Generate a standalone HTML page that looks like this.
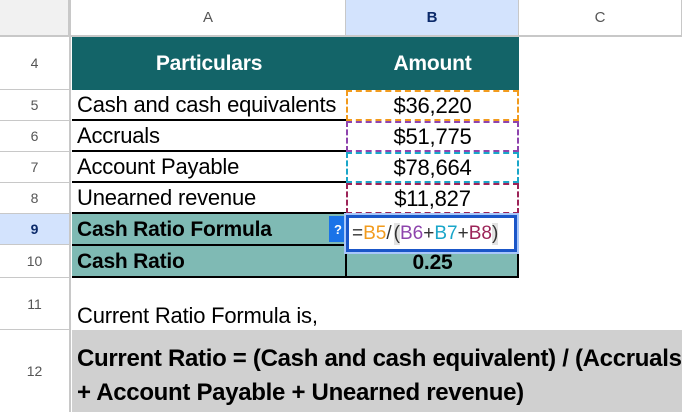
<!DOCTYPE html>
<html><head><meta charset="utf-8"><style>
body{margin:0;width:682px;height:412px;overflow:hidden;background:#fff;font-family:"Liberation Sans",sans-serif;position:relative}
div{position:absolute;box-sizing:border-box}
.rh{left:0;width:71px;background:#fff;border-bottom:1px solid #c8c8c8;border-right:2px solid #c8c8c8;color:#555;font-size:14px;display:flex;align-items:center;justify-content:center}
.ch{top:0;height:37px;border-right:1px solid #c8c8c8;border-bottom:2px solid #c8c8c8;color:#555;font-size:15px;display:flex;align-items:center;justify-content:center}
.t{font-size:22px;color:#000;display:flex;align-items:center;white-space:nowrap;letter-spacing:-0.2px}
.a{left:72px;width:274px;padding-left:5px;border-bottom:2px solid #000}
.b{left:346px;width:173px;justify-content:center}
</style></head><body>
<div class="ch" style="left:0;width:71px;background:#f1f1f1;border-right:3px solid #c8c8c8"></div>
<div class="ch" style="left:71px;width:275px">A</div>
<div class="ch" style="left:346px;width:173px;background:#d3e3fd;color:#0b2a6a;font-weight:bold">B</div>
<div class="ch" style="left:519px;width:163px">C</div>

<div class="rh" style="top:37px;height:53px">4</div>
<div class="rh" style="top:90px;height:31px">5</div>
<div class="rh" style="top:121px;height:31px">6</div>
<div class="rh" style="top:152px;height:31px">7</div>
<div class="rh" style="top:183px;height:31px">8</div>
<div class="rh" style="top:214px;height:31px;background:#d3e3fd;color:#0b2a6a;font-weight:bold">9</div>
<div class="rh" style="top:245px;height:33px">10</div>
<div class="rh" style="top:278px;height:52px">11</div>
<div class="rh" style="top:330px;height:82px;border-bottom:none">12</div>

<div class="t" style="left:72px;top:37px;width:447px;height:53px;background:#136468"></div>
<div class="t" style="left:72px;top:37px;width:274px;height:53px;color:#fff;font-weight:bold;justify-content:center;font-size:21px">Particulars</div>
<div class="t" style="left:346px;top:37px;width:173px;height:53px;color:#fff;font-weight:bold;justify-content:center;font-size:21px">Amount</div>

<div class="t a" style="top:90px;height:31px">Cash and cash equivalents</div>
<div class="t a" style="top:121px;height:31px">Accruals</div>
<div class="t a" style="top:152px;height:31px">Account Payable</div>
<div class="t a" style="top:183px;height:31px;border-bottom:2px solid #000">Unearned revenue</div>
<div class="t b" style="top:90px;height:31px;border:2px dashed #f29b1d">$36,220</div>
<div class="t b" style="top:121px;height:31px;border:2px dashed #8e44ad">$51,775</div>
<div class="t b" style="top:152px;height:31px;border:2px dashed #1aa6c9">$78,664</div>
<div class="t b" style="top:183px;height:31px;border:2px dashed #9c2458">$11,827</div>

<div class="t" style="left:72px;top:214px;width:447px;height:64px;background:#7fbab4;border-bottom:2px solid #000;border-right:2px solid #000"></div>
<div class="t" style="left:72px;top:244px;width:447px;height:2px;background:#000"></div>
<div class="t" style="left:345px;top:214px;width:2px;height:64px;background:#000"></div>
<div class="t" style="left:77px;top:214px;height:31px;font-weight:bold;font-size:21px">Cash Ratio Formula</div>
<div class="t" style="left:77px;top:246px;height:31px;font-weight:bold;font-size:21px">Cash Ratio</div>
<div class="t b" style="top:247px;height:31px;font-weight:bold;font-size:21px">0.25</div>

<div style="left:329px;top:216px;width:18px;height:26px;background:#1a73e8;color:#fff;font-size:13px;font-weight:bold;display:flex;align-items:center;justify-content:center">?</div>
<div style="left:344px;top:213px;width:175px;height:41px;border:2px solid #a8c7fa"></div>
<div class="t" style="left:346px;top:215px;width:171px;height:37px;background:#fff;border:3px solid #1a56c8;font-size:19px;padding-left:3px;justify-content:flex-start;letter-spacing:0">
<span style="color:#333">=</span><span style="color:#f29b1d">B5</span><span style="color:#333">/</span><span style="background:#e3e3e3;color:#333;margin-left:2px">(</span><span style="color:#8e44ad">B6</span><span style="color:#333">+</span><span style="color:#1aa6c9">B7</span><span style="color:#333">+</span><span style="color:#9c2458">B8</span><span style="background:#e3e3e3;color:#333">)</span></div>

<div class="t" style="left:77px;top:303px;height:26px">Current Ratio Formula is,</div>
<div class="t" style="left:72px;top:330px;width:610px;height:82px;background:#d0d0d0;font-weight:bold;display:block;padding:12px 0 0 5px;line-height:34px;white-space:nowrap;font-size:24px;letter-spacing:-0.3px;overflow:hidden">Current Ratio = (Cash and cash equivalent) / (Accruals<br>+ Account Payable + Unearned revenue)</div>
</body></html>
